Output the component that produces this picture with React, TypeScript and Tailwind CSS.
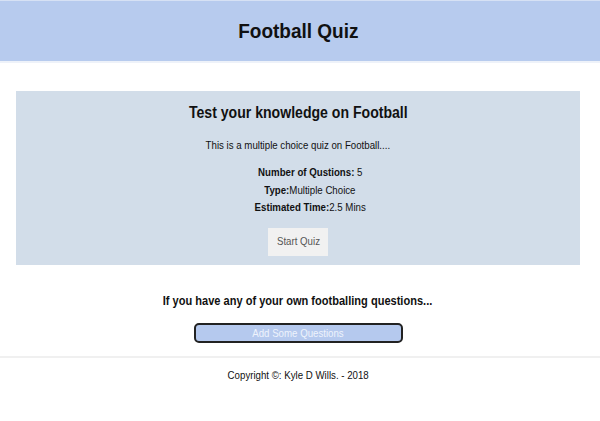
export default function App() {
  return (
    <div className="min-h-[421px] w-[600px] bg-white text-black" style={{ fontFamily: '"Liberation Sans", Arial, sans-serif' }}>
      <header className="flex h-[61px] items-center justify-center border-t border-[#d6e1f4] bg-[#b7cbee] pr-[4px]">
        <h1 className="inline-block scale-x-[0.95] text-[20px] font-bold leading-[24px] text-[#111]">Football Quiz</h1>
      </header>
      <div className="h-[2px] bg-[#eef2f9]" />
      <main className="w-[596px] pt-[28px]">
        <section className="ml-[16px] flex h-[174px] w-[564px] flex-col items-center bg-[#d2dde9] pt-[12px]">
          <h2 className="inline-block scale-x-[0.88] text-[16px] font-bold leading-[20px] text-[#111]">Test your knowledge on Football</h2>
          <p className="mt-[14px] inline-block scale-x-[0.88] text-[11px] leading-[16px] text-[#111]">This is a multiple choice quiz on Football....</p>
          <div className="mt-[11px] flex flex-col items-center pl-[24px] text-[11px] leading-[17.5px] text-[#111]">
            <div className="scale-x-[0.88]"><span className="font-bold">Number of Qustions:</span> 5</div>
            <div className="scale-x-[0.88]"><span className="font-bold">Type:</span>Multiple Choice</div>
            <div className="scale-x-[0.88]"><span className="font-bold">Estimated Time:</span>2.5 Mins</div>
          </div>
          <button className="mt-[11px] flex h-[28px] w-[60px] items-center justify-center bg-[#f1f1f1] text-[11px] text-[#555]">
            <span className="inline-block scale-x-[0.88]">Start Quiz</span>
          </button>
        </section>
        <h3 className="mt-[26px] text-center text-[13px] font-bold leading-[20px] text-[#111]">
          <span className="inline-block scale-x-[0.85]">If you have any of your own footballing questions...</span>
        </h3>
        <div className="mt-[12px] flex justify-center">
          <button className="flex h-[20px] w-[209px] items-center justify-center rounded-[5px] border-2 border-[#222] bg-[#b5c9ee] text-[11px] text-[#eef3fc]">
            <span className="inline-block scale-x-[0.88]">Add Some Questions</span>
          </button>
        </div>
      </main>
      <footer className="mt-[13px] border-t-2 border-[#f0f0f0]">
        <div className="w-[596px] pt-[9px] text-center text-[11px] leading-[16px] text-[#111]">
          <span className="inline-block scale-x-[0.88]">Copyright ©: Kyle D Wills. - 2018</span>
        </div>
      </footer>
    </div>
  );
}
